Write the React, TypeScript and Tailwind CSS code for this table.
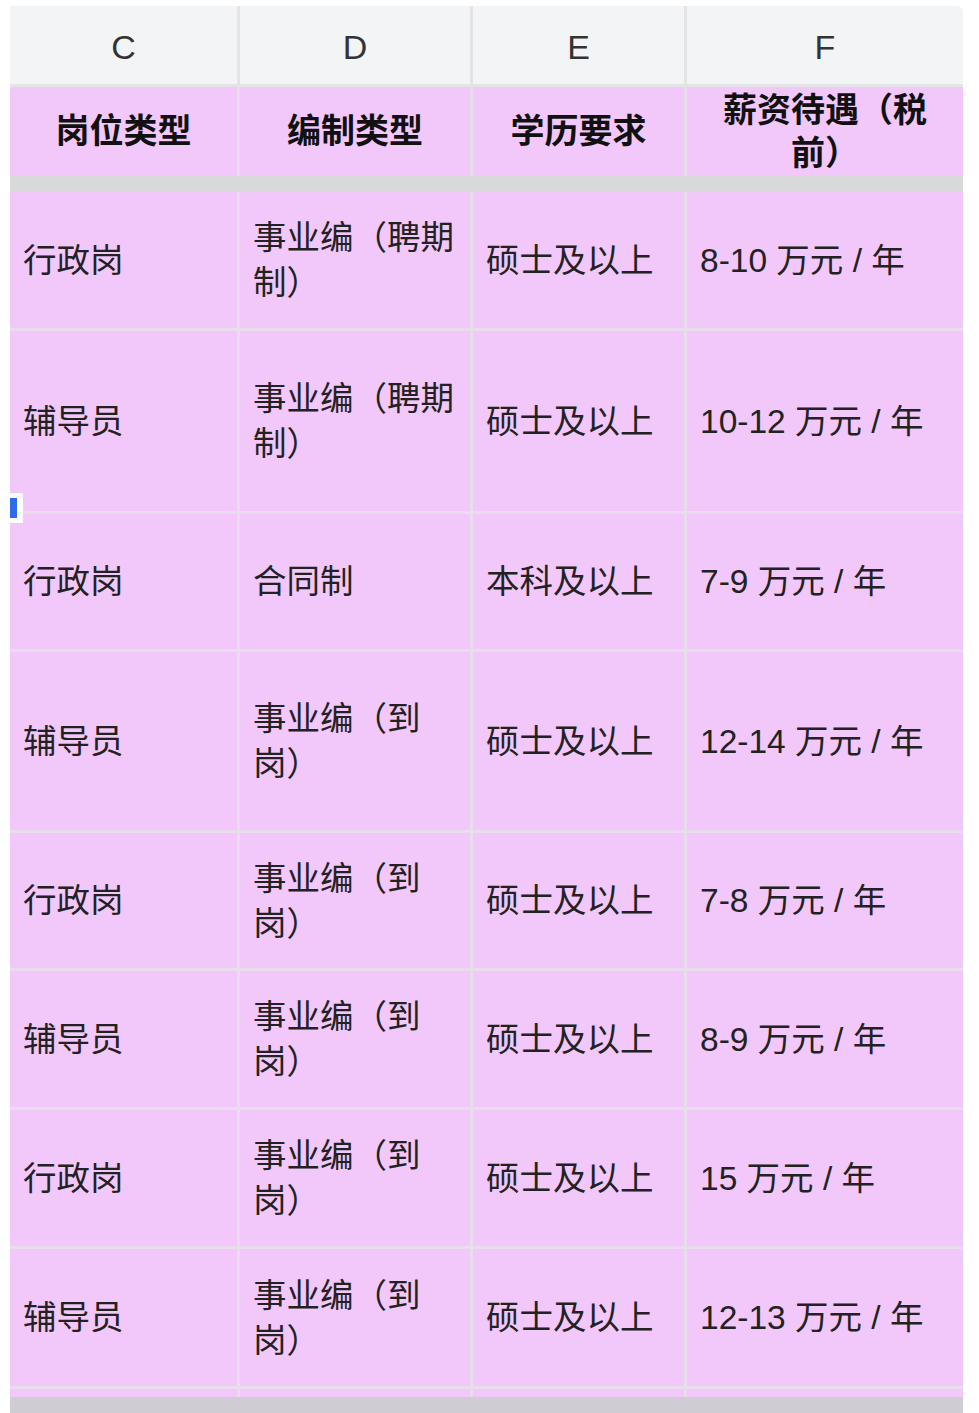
import React from "react";

const font = "font-['Liberation_Sans','Noto_Sans_CJK_SC',sans-serif]";

// column widths incl. 3px right border (last one has none)
const cols = [
  "w-[230px] border-r-[3px]",
  "w-[233px] border-r-[3px]",
  "w-[214px] border-r-[3px]",
  "flex-1",
];

const letters = ["C", "D", "E", "F"];
const headers = ["岗位类型", "编制类型", "学历要求", "薪资待遇（税前）"];

const rows = [
  { h: "h-[139px]", cells: ["行政岗", "事业编（聘期制）", "硕士及以上", "8-10 万元 / 年"] },
  { h: "h-[183px]", cells: ["辅导员", "事业编（聘期制）", "硕士及以上", "10-12 万元 / 年"] },
  { h: "h-[138px]", cells: ["行政岗", "合同制", "本科及以上", "7-9 万元 / 年"] },
  { h: "h-[181px]", cells: ["辅导员", "事业编（到岗）", "硕士及以上", "12-14 万元 / 年"] },
  { h: "h-[138px]", cells: ["行政岗", "事业编（到岗）", "硕士及以上", "7-8 万元 / 年"] },
  { h: "h-[139px]", cells: ["辅导员", "事业编（到岗）", "硕士及以上", "8-9 万元 / 年"] },
  { h: "h-[139px]", cells: ["行政岗", "事业编（到岗）", "硕士及以上", "15 万元 / 年"] },
  { h: "h-[140px]", cells: ["辅导员", "事业编（到岗）", "硕士及以上", "12-13 万元 / 年"] },
];

export default function App() {
  return (
    <div className={`relative h-[1413px] w-[979px] overflow-hidden bg-white ${font}`}>
      <div className="ml-[10px] mt-[6px] flex w-[953px] flex-col">
        {/* column letters */}
        <div className="flex h-[81px] border-b-[3px] border-[#e4e4e6] bg-[#f3f4f6] rounded-tr-md">
          {letters.map((l, i) => (
            <div
              key={l}
              className={`${cols[i]} flex items-center justify-center border-[#e4e4e6] pt-[4px] text-[34px] text-[#333]`}
            >
              {l}
            </div>
          ))}
        </div>

        {/* pink header row */}
        <div className="flex h-[89px] bg-[#f2c7fa]">
          {headers.map((t, i) => (
            <div
              key={t}
              className={`${cols[i]} flex items-center justify-center border-[#e9dcec] px-[13px] text-center text-[34px] font-bold leading-[43px] text-[#111]`}
            >
              {t}
            </div>
          ))}
        </div>

        {/* frozen row divider */}
        <div className="h-[16px] bg-[#d9d9db]" />

        {rows.map((r, ri) => (
          <div key={ri} className={`flex ${r.h} border-b-[3px] border-[#e9dcec] bg-[#f2c7fa]`}>
            {r.cells.map((c, i) => (
              <div
                key={i}
                className={`${cols[i]} flex items-center border-[#e9dcec] px-[13px] text-[33.5px] leading-[45px] text-[#222]`}
              >
                {c}
              </div>
            ))}
          </div>
        ))}

        {/* cut-off next row */}
        <div className="flex h-[8px] bg-[#f2c7fa]">
          {cols.map((c, i) => (
            <div key={i} className={`${c} border-[#e9dcec]`} />
          ))}
        </div>
        <div className="h-[20px] bg-[#cfcdd3]" />
      </div>

      {/* selection handle */}
      <div className="absolute left-[10px] top-[493px] flex h-[30px] w-[13px] items-center bg-white">
        <div className="h-[20px] w-[7px] bg-[#2f6bf0]" />
      </div>
    </div>
  );
}
